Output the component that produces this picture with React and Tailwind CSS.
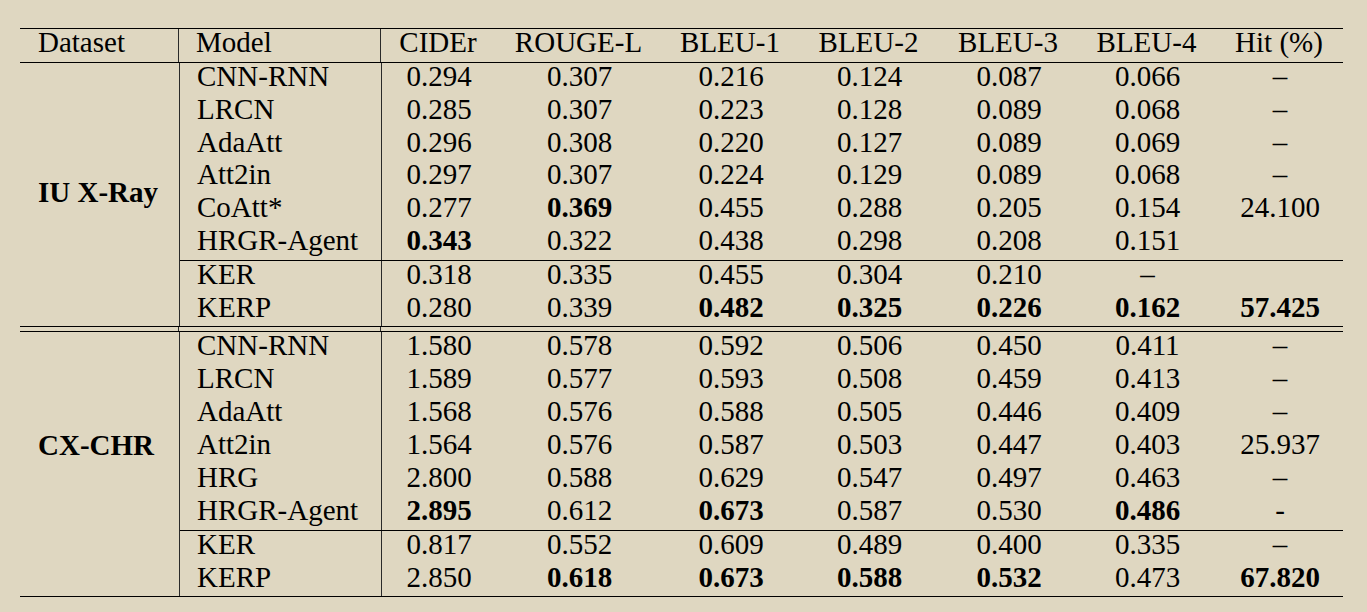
import React from "react";

const widths = ["w-[114px]", "w-[167px]", "w-[136px]", "w-[141px]", "w-[138px]", "w-[139px]", "w-[126px]"];
const headers = ["CIDEr", "ROUGE-L", "BLEU-1", "BLEU-2", "BLEU-3", "BLEU-4", "Hit (%)"];

// "!" in front of a value means it is printed bold
const groups = [
  {
    name: "IU X-Ray",
    labelPad: "pt-[116px]",
    heights: ["h-[32.8px]", "h-[32.8px]"],
    parts: [
      [
        ["CNN-RNN", "0.294", "0.307", "0.216", "0.124", "0.087", "0.066", "–"],
        ["LRCN", "0.285", "0.307", "0.223", "0.128", "0.089", "0.068", "–"],
        ["AdaAtt", "0.296", "0.308", "0.220", "0.127", "0.089", "0.069", "–"],
        ["Att2in", "0.297", "0.307", "0.224", "0.129", "0.089", "0.068", "–"],
        ["CoAtt*", "0.277", "!0.369", "0.455", "0.288", "0.205", "0.154", "24.100"],
        ["HRGR-Agent", "!0.343", "0.322", "0.438", "0.298", "0.208", "0.151", ""],
      ],
      [
        ["KER", "0.318", "0.335", "0.455", "0.304", "0.210", "–", ""],
        ["KERP", "0.280", "0.339", "!0.482", "!0.325", "!0.226", "!0.162", "!57.425"],
      ],
    ],
  },
  {
    name: "CX-CHR",
    labelPad: "pt-[100px]",
    heights: ["h-[33px]", "h-[32.2px]"],
    parts: [
      [
        ["CNN-RNN", "1.580", "0.578", "0.592", "0.506", "0.450", "0.411", "–"],
        ["LRCN", "1.589", "0.577", "0.593", "0.508", "0.459", "0.413", "–"],
        ["AdaAtt", "1.568", "0.576", "0.588", "0.505", "0.446", "0.409", "–"],
        ["Att2in", "1.564", "0.576", "0.587", "0.503", "0.447", "0.403", "25.937"],
        ["HRG", "2.800", "0.588", "0.629", "0.547", "0.497", "0.463", "–"],
        ["HRGR-Agent", "!2.895", "0.612", "!0.673", "0.587", "0.530", "!0.486", "-"],
      ],
      [
        ["KER", "0.817", "0.552", "0.609", "0.489", "0.400", "0.335", "–"],
        ["KERP", "2.850", "!0.618", "!0.673", "!0.588", "!0.532", "0.473", "!67.820"],
      ],
    ],
  },
];

function Cell({ value, width }) {
  const bold = value.startsWith("!");
  return (
    <div className={`${width} shrink-0 text-center ${bold ? "font-bold" : ""}`}>
      {bold ? value.slice(1) : value}
    </div>
  );
}

function Row({ row, height }) {
  const [model, ...values] = row;
  return (
    <div className={`flex items-start ${height}`}>
      <div className="w-[202px] shrink-0 self-stretch pl-[17px] border-r border-[#2a2a2a]">{model}</div>
      {values.map((v, i) => (
        <Cell key={i} value={v} width={widths[i]} />
      ))}
    </div>
  );
}

function Group({ group, className }) {
  return (
    <div className={`flex ${className}`}>
      <div className={`w-[159px] shrink-0 pl-[18px] font-bold ${group.labelPad}`}>{group.name}</div>
      <div className="flex flex-col border-l border-[#2a2a2a]">
        {group.parts.map((part, p) => (
          <div key={p} className={p > 0 ? "border-t border-black" : ""}>
            {part.map((row, r) => (
              <Row key={r} row={row} height={group.heights[p]} />
            ))}
          </div>
        ))}
      </div>
    </div>
  );
}

export default function App() {
  return (
    <div
      className="w-[1367px] h-[612px] bg-[#dfd7c1] pt-[28px] pl-[20px] text-black text-[29px] leading-[26px]"
      style={{ fontFamily: '"Liberation Serif", "Times New Roman", serif' }}
    >
      <div className="w-[1323px] border-t border-b border-black">
        <div className="flex items-start h-[34px] border-b border-black">
          <div className="w-[159px] shrink-0 pl-[18px] self-stretch border-r border-[#2a2a2a]">Dataset</div>
          <div className="w-[202px] shrink-0 pl-[17px] self-stretch border-r border-[#2a2a2a]">Model</div>
          {headers.map((h, i) => (
            <div key={h} className={`${widths[i]} shrink-0 text-center`}>
              {h}
            </div>
          ))}
        </div>
        <Group group={groups[0]} className="border-b border-black" />
        <div className="flex h-[4px]">
          <div className="w-[159px] shrink-0 border-r border-[#2a2a2a]" />
          <div className="w-[202px] shrink-0 border-r border-[#2a2a2a]" />
        </div>
        <Group group={groups[1]} className="border-t border-black" />
      </div>
    </div>
  );
}
